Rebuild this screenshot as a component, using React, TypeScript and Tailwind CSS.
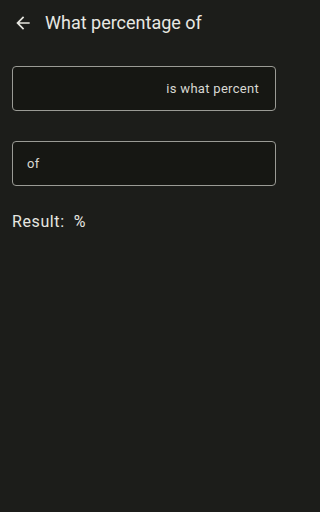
export default function App() {
  return (
    <div className="w-full min-h-screen bg-[#1c1d1a]">
      <div
        className="w-[288px] h-[512px] bg-[#1c1d1a] text-[#e6e6e0] overflow-hidden"
        style={{ fontFamily: "Roboto, 'Noto Sans', sans-serif" }}
      >
        {/* Top bar */}
        <div className="h-[45px] pt-[1px] flex items-center">
          <div className="w-[45px] flex justify-center pl-[1px]">
            <svg viewBox="0 0 24 24" className="w-[20px] h-[20px]" fill="#e6e6e0">
              <path d="M20 11H7.83l5.59-5.59L12 4l-8 8 8 8 1.41-1.41L7.83 13H20v-2z" />
            </svg>
          </div>
          <h1 className="text-[18px] leading-none text-[#e8e8e2]">What percentage of</h1>
        </div>

        <div className="px-3 pt-[21px] flex flex-col">
          {/* Input 1 */}
          <div className="h-[45px] rounded-[4px] border border-[#9a9b95] bg-[#161713] flex items-center justify-end pr-[16px] pt-[1px]">
            <span className="text-[13px] tracking-[0.3px] text-[#d8d8d2]">is what percent</span>
          </div>

          {/* Input 2 */}
          <div className="mt-[30px] h-[45px] rounded-[4px] border border-[#9a9b95] bg-[#161713] flex items-center pl-[14px] pt-[1px]">
            <span className="text-[13px] tracking-[0.3px] text-[#d8d8d2]">of</span>
          </div>

          {/* Result */}
          <div className="mt-[25px] text-[16px] leading-[22px] text-[#e6e6e0] tracking-[0.6px]">
            Result:&nbsp;&nbsp;%
          </div>
        </div>
      </div>
    </div>
  );
}
